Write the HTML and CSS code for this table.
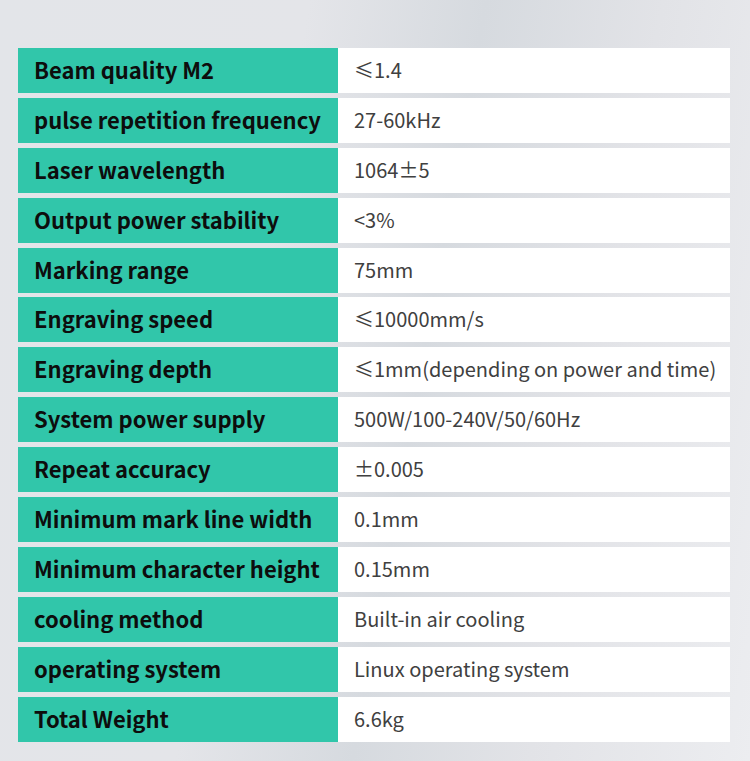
FILE: index.html
```html
<!DOCTYPE html>
<html>
<head>
<meta charset="utf-8">
<link rel="stylesheet" href="styles.css">
</head>
<body>
<div class="page">
  <div class="table">
    <div class="row"><div class="k">Beam quality M2</div><div class="v">≤1.4</div></div>
    <div class="row"><div class="k">pulse repetition frequency</div><div class="v">27-60kHz</div></div>
    <div class="row"><div class="k">Laser wavelength</div><div class="v">1064±5</div></div>
    <div class="row"><div class="k">Output power stability</div><div class="v">&lt;3%</div></div>
    <div class="row"><div class="k">Marking range</div><div class="v">75mm</div></div>
    <div class="row"><div class="k">Engraving speed</div><div class="v">≤10000mm/s</div></div>
    <div class="row"><div class="k">Engraving depth</div><div class="v">≤1mm(depending on power and time)</div></div>
    <div class="row"><div class="k">System power supply</div><div class="v">500W/100-240V/50/60Hz</div></div>
    <div class="row"><div class="k">Repeat accuracy</div><div class="v">±0.005</div></div>
    <div class="row"><div class="k">Minimum mark line width</div><div class="v">0.1mm</div></div>
    <div class="row"><div class="k">Minimum character height</div><div class="v">0.15mm</div></div>
    <div class="row"><div class="k">cooling method</div><div class="v">Built-in air cooling</div></div>
    <div class="row"><div class="k">operating system</div><div class="v">Linux operating system</div></div>
    <div class="row"><div class="k">Total Weight</div><div class="v">6.6kg</div></div>
  </div>
</div>
</body>
</html>
```

FILE: styles.css
```css
html, body {
  margin: 0;
  padding: 0;
}
body {
  width: 750px;
  height: 761px;
  overflow: hidden;
  background: linear-gradient(100deg, #e3e5e9 0%, #e4e5e9 35%, #d6dadf 55%, #e2e3e7 75%, #ecedf0 100%);
  font-family: "Noto Sans CJK SC", "Noto Sans", sans-serif;
}
.page {
  padding: 48px 20px 0 18px;
}
.table {
  display: flex;
  flex-direction: column;
  gap: 4.9px;
  width: 712px;
}
.row {
  display: flex;
  height: 45px;
}
.k {
  width: 320px;
  flex: none;
  background: #31c6aa;
  color: #0d0d0d;
  font-weight: 700;
  font-size: 22px;
  padding: 0 0 3px 16px;
  box-sizing: border-box;
  display: flex;
  align-items: center;
  white-space: nowrap;
}
.v {
  flex: 1;
  background: #ffffff;
  color: #404040;
  font-size: 20px;
  font-weight: 400;
  padding: 0 0 2px 16px;
  display: flex;
  align-items: center;
  white-space: nowrap;
}
```
